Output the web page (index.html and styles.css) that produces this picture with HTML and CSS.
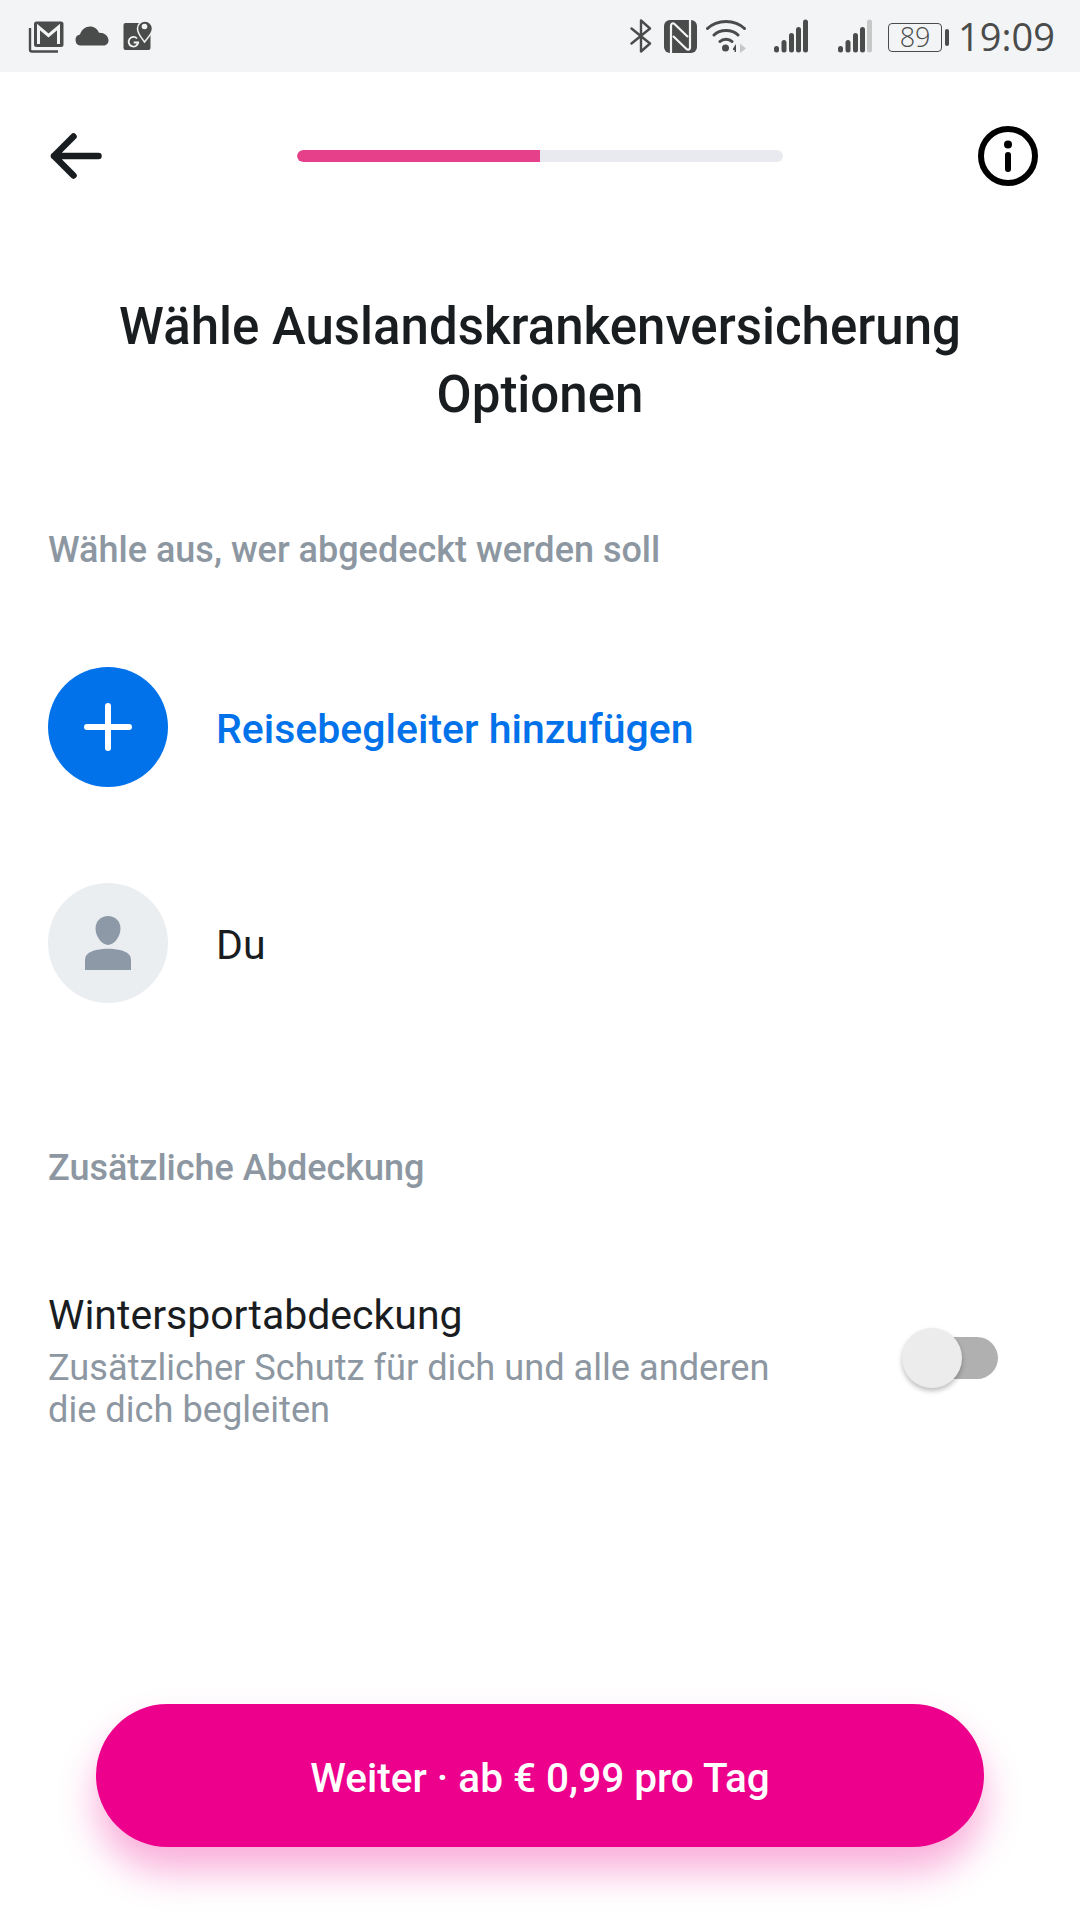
FILE: index.html
```html
<!DOCTYPE html>
<html lang="de">
<head>
  <meta charset="UTF-8" />
  <meta name="viewport" content="width=device-width, initial-scale=1" />
  <title>Auslandskrankenversicherung</title>
  <link rel="stylesheet" href="styles.css">
</head>
<body>
  <div class="status-bar">
    <div class="status-left">
      <!-- mail stack -->
      <svg class="ic-mail" width="36" height="32" viewBox="0 0 36 32">
        <path d="M2 7v21.500a2 2 0 0 0 2 2h26" fill="none" stroke="#4a4c4b" stroke-width="2.400"/>
        <rect x="6" y="0.500" width="29.500" height="25.500" rx="2.500" fill="#4a4c4b"/>
        <path d="M10.500 23V6l10 8.500L30.500 6v17" fill="none" stroke="#f3f4f6" stroke-width="3"/>
      </svg>
      <!-- cloud -->
      <svg class="ic-cloud" width="34" height="20" viewBox="0 0 34 20">
        <path d="M6 19.500a5.500 5.500 0 0 1-1-10.900C6.500 3.500 10.500 0.500 15 0.500c4.200 0 7.700 2.500 9 6.300 4.700-.5 9 2.500 9.500 7.200.3 3-2 5.500-5 5.500z" fill="#4a4c4b"/>
      </svg>
      <!-- maps -->
      <svg class="ic-maps" width="30" height="32" viewBox="0 0 30 32">
        <path d="M2.500 4h13l12 8v17a2 2 0 0 1-2 2h-23a2 2 0 0 1-2-2V6a2 2 0 0 1 2-2z" fill="#4a4c4b"/>
        <path d="M21.500 23c-3-4.500-7-8-7-13.500a7.500 7.500 0 0 1 15 0c0 5.500-5 9-8 13.500z" fill="#4a4c4b" stroke="#f3f4f6" stroke-width="1.500"/>
        <circle cx="21.500" cy="7.500" r="2.800" fill="#f3f4f6"/>
        <path d="M14 19.500a4.800 4.800 0 1 0 1.200 4h-4.500" fill="none" stroke="#f3f4f6" stroke-width="1.800"/>
      </svg>
    </div>
    <div class="status-right">
      <!-- bluetooth -->
      <svg class="ic-bt" width="22" height="34" viewBox="0 0 22 34">
        <path d="M1.500 9.500 20 24.500 11 32.500V1.500l9 8L1.500 24.500" fill="none" stroke="#4a4c4b" stroke-width="2.400" stroke-linejoin="round" stroke-linecap="round"/>
      </svg>
      <!-- nfc -->
      <svg class="ic-nfc" width="33" height="33" viewBox="0 0 33 33">
        <rect width="33" height="33" rx="6" fill="#4a4c4b"/>
        <path d="M7 33V5.500c0-2 2-3 3.500-1.500L24 17M26 0v27.500c0 2-2 3-3.500 1.500L9 16" fill="none" stroke="#f3f4f6" stroke-width="2.200"/>
      </svg>
      <!-- wifi -->
      <svg class="ic-wifi" width="40" height="34" viewBox="0 0 40 34">
        <path d="M1.500 9.500c9.500-9.500 27.500-9.500 37 0M8 16c6-6 18-6 24 0M14 22.500c3-3 9-3 12 0" fill="none" stroke="#4a4c4b" stroke-width="3" stroke-linecap="round"/>
        <circle cx="19.500" cy="29" r="3.500" fill="#4a4c4b"/>
        <path d="M27 29.500 30 25v8h-1.500v-2H27z" fill="#4a4c4b"/>
        <path d="M34 24.500 40 29.500 34 34z" fill="#c6c8c8"/>
      </svg>
      <!-- signal, sim 1 -->
      <svg class="ic-signal" width="35" height="34" viewBox="0 0 35 34">
        <rect x="1" y="27" width="5" height="6.500" rx="2.500" fill="#4a4c4b"/>
        <rect x="8.500" y="21" width="5" height="12.500" rx="2.500" fill="#4a4c4b"/>
        <rect x="16" y="14" width="5" height="19.500" rx="2.500" fill="#4a4c4b"/>
        <rect x="23" y="8" width="5" height="25.500" rx="2.500" fill="#4a4c4b"/>
        <rect x="30" y="0.500" width="5" height="33" rx="2.500" fill="#4a4c4b"/>
      </svg>
      <!-- signal, sim 2 -->
      <svg class="ic-signal2" width="35" height="34" viewBox="0 0 35 34">
        <rect x="1" y="27" width="5" height="6.500" rx="2.500" fill="#4a4c4b"/>
        <rect x="8.500" y="21" width="5" height="12.500" rx="2.500" fill="#4a4c4b"/>
        <rect x="16" y="14" width="5" height="19.500" rx="2.500" fill="#4a4c4b"/>
        <rect x="23" y="8" width="5" height="25.500" rx="2.500" fill="#4a4c4b"/>
        <rect x="30" y="0.500" width="5" height="33" rx="2.500" fill="#c6c8c8"/>
      </svg>
      <div class="battery">
        <div class="battery-body">89</div>
        <div class="battery-tip"></div>
      </div>
      <span class="clock">19:09</span>
    </div>
  </div>

  <header class="top-bar">
    <svg class="back" width="52" height="46" viewBox="0 0 52 46">
      <path d="M4 23h44.500M23.500 3.500 4 23l19.500 19.500" fill="none" stroke="#1a1d1f" stroke-width="6.500" stroke-linecap="round" stroke-linejoin="round"/>
    </svg>
    <div class="progress"><div class="progress-fill"></div></div>
    <svg class="info" width="60" height="60" viewBox="0 0 60 60">
      <circle cx="30" cy="30" r="27" fill="none" stroke="#000" stroke-width="6"/>
      <circle cx="30" cy="18.500" r="4" fill="#000"/>
      <path d="M30 29v14" stroke="#000" stroke-width="6" stroke-linecap="round"/>
    </svg>
  </header>

  <main>
    <h1>Wähle Auslandskrankenversicherung Optionen</h1>

    <h2 class="section-label">Wähle aus, wer abgedeckt werden soll</h2>

    <div class="person-row">
      <div class="avatar avatar-add">
        <svg width="48" height="48" viewBox="0 0 48 48">
          <path d="M24 3v42M3 24h42" stroke="#fff" stroke-width="6" stroke-linecap="round"/>
        </svg>
      </div>
      <span class="add-link">Reisebegleiter hinzufügen</span>
    </div>

    <div class="person-row">
      <div class="avatar avatar-me">
        <svg width="46" height="54" viewBox="0 0 46 54">
          <path d="M23 0c7 0 12.500 5 12.500 12.500C35.500 20.500 29 29 23 29S10.500 20.500 10.500 12.500C10.500 5 16 0 23 0z" fill="#8d99a7"/>
          <path d="M0 54V44c0-5 4-8 9-9.500 9-2.500 19-2.500 28 0 5 1.500 9 4.500 9 9.500v10z" fill="#8d99a7"/>
        </svg>
      </div>
      <span class="person-name">Du</span>
    </div>

    <h2 class="section-label section-extra">Zusätzliche Abdeckung</h2>

    <div class="option-row">
      <div class="option-text">
        <div class="option-title">Wintersportabdeckung</div>
        <div class="option-desc">Zusätzlicher Schutz für dich und alle anderen die dich begleiten</div>
      </div>
      <div class="toggle"><div class="toggle-knob"></div></div>
    </div>
  </main>

  <div class="footer">
    <button class="next-btn">Weiter · ab € 0,99 pro Tag</button>
  </div>
</body>
</html>
```
FILE: styles.css
```css
body {
  font-family: Roboto, sans-serif;
  background-color: #fff;
  margin: 0;
  width: 1080px;
  height: 1920px;
  display: flex;
  flex-direction: column;
  color: #1a1d1f;
  overflow: hidden;
}

.status-bar {
  height: 72px;
  background-color: #f3f4f6;
  display: flex;
  justify-content: space-between;
  align-items: flex-start;
  flex-shrink: 0;
}

.status-left,
.status-right {
  display: flex;
  align-items: flex-start;
}

.status-left {
  padding-left: 28px;
}

.status-right {
  padding-right: 25px;
}

.ic-mail { margin-top: 21px; }
.ic-cloud { margin: 26px 0 0 11px; }
.ic-maps { margin: 19px 0 0 14px; }
.ic-bt { margin: 19px 0 0 0; }
.ic-nfc { margin: 20px 0 0 12px; }
.ic-wifi { margin: 19px 0 0 9px; }
.ic-signal { margin: 19px 0 0 27px; }
.ic-signal2 { margin: 19px 0 0 29px; }

.battery {
  display: flex;
  align-items: center;
  margin: 23px 0 0 16px;
  height: 29px;
}

.battery-body {
  width: 54px;
  height: 29px;
  box-sizing: border-box;
  border: 1.5px solid #4a4c4b;
  border-radius: 4px;
  font-size: 27px;
  font-weight: 300;
  line-height: 26px;
  text-align: center;
  color: #4a4c4b;
  font-family: "Open Sans", sans-serif;
}

.battery-tip {
  width: 4px;
  height: 17px;
  margin-left: 3px;
  border-radius: 2px;
  background-color: #4a4c4b;
}

.clock {
  font-family: "Open Sans", sans-serif;
  font-size: 38px;
  line-height: 72px;
  margin-left: 9px;
  color: #4a4c4b;
}

.top-bar {
  height: 168px;
  padding: 0 42px 0 50px;
  display: flex;
  justify-content: space-between;
  align-items: center;
  box-sizing: border-box;
  flex-shrink: 0;
}

.progress {
  width: 486px;
  height: 12px;
  border-radius: 6px;
  background-color: #e9e9f0;
  overflow: hidden;
}

.progress-fill {
  width: 50%;
  height: 100%;
  border-radius: 6px 0 0 6px;
  background-color: #e6408b;
}

main {
  flex-grow: 1;
  padding: 53px 48px 0;
}

h1 {
  margin: 0 auto;
  width: 880px;
  text-align: center;
  font-size: 51px;
  line-height: 68px;
  font-weight: 500;
}

.section-label {
  margin: 0;
  font-size: 36px;
  line-height: 44px;
  font-weight: 500;
  color: #8d97a2;
}

h1 + .section-label {
  margin-top: 99px;
}

.person-row {
  display: flex;
  align-items: center;
  gap: 48px;
  margin-top: 96px;
}

h2 + .person-row {
  margin-top: 95px;
}

.avatar {
  width: 120px;
  height: 120px;
  border-radius: 50%;
  display: flex;
  justify-content: center;
  align-items: center;
  flex-shrink: 0;
}

.avatar-add {
  background-color: #0272eb;
}

.avatar-me {
  background-color: #ebeef1;
}

.add-link {
  font-size: 41px;
  font-weight: 500;
  color: #0272eb;
  padding-top: 4px;
}

.person-name {
  font-size: 41px;
  padding-top: 4px;
}

.section-extra {
  margin-top: 143px;
}

.option-row {
  display: flex;
  justify-content: space-between;
  align-items: center;
  margin-top: 100px;
  padding-right: 34px;
}

.option-text {
  width: 760px;
}

.option-title {
  font-size: 41px;
  line-height: 50px;
}

.option-desc {
  margin-top: 7px;
  font-size: 36.2px;
  line-height: 42px;
  color: #8d97a2;
}

.toggle {
  position: relative;
  width: 70px;
  height: 42px;
  border-radius: 21px;
  background-color: #b0b0b0;
  margin-top: -6px;
}

.toggle-knob {
  position: absolute;
  left: -26px;
  top: -9px;
  width: 60px;
  height: 60px;
  border-radius: 50%;
  background-color: #ececec;
  box-shadow: 0 3px 5px rgba(0,0,0,0.25);
}

.footer {
  padding: 0 96px 73px;
  flex-shrink: 0;
}

.next-btn {
  width: 100%;
  height: 143px;
  border: none;
  border-radius: 72px;
  background-color: #ec008c;
  color: #fff;
  font-family: Roboto, sans-serif;
  font-size: 40.5px;
  font-weight: 500;
  padding-top: 6px;
  box-shadow: 0 24px 38px rgba(236,0,140,0.32);
}
```
